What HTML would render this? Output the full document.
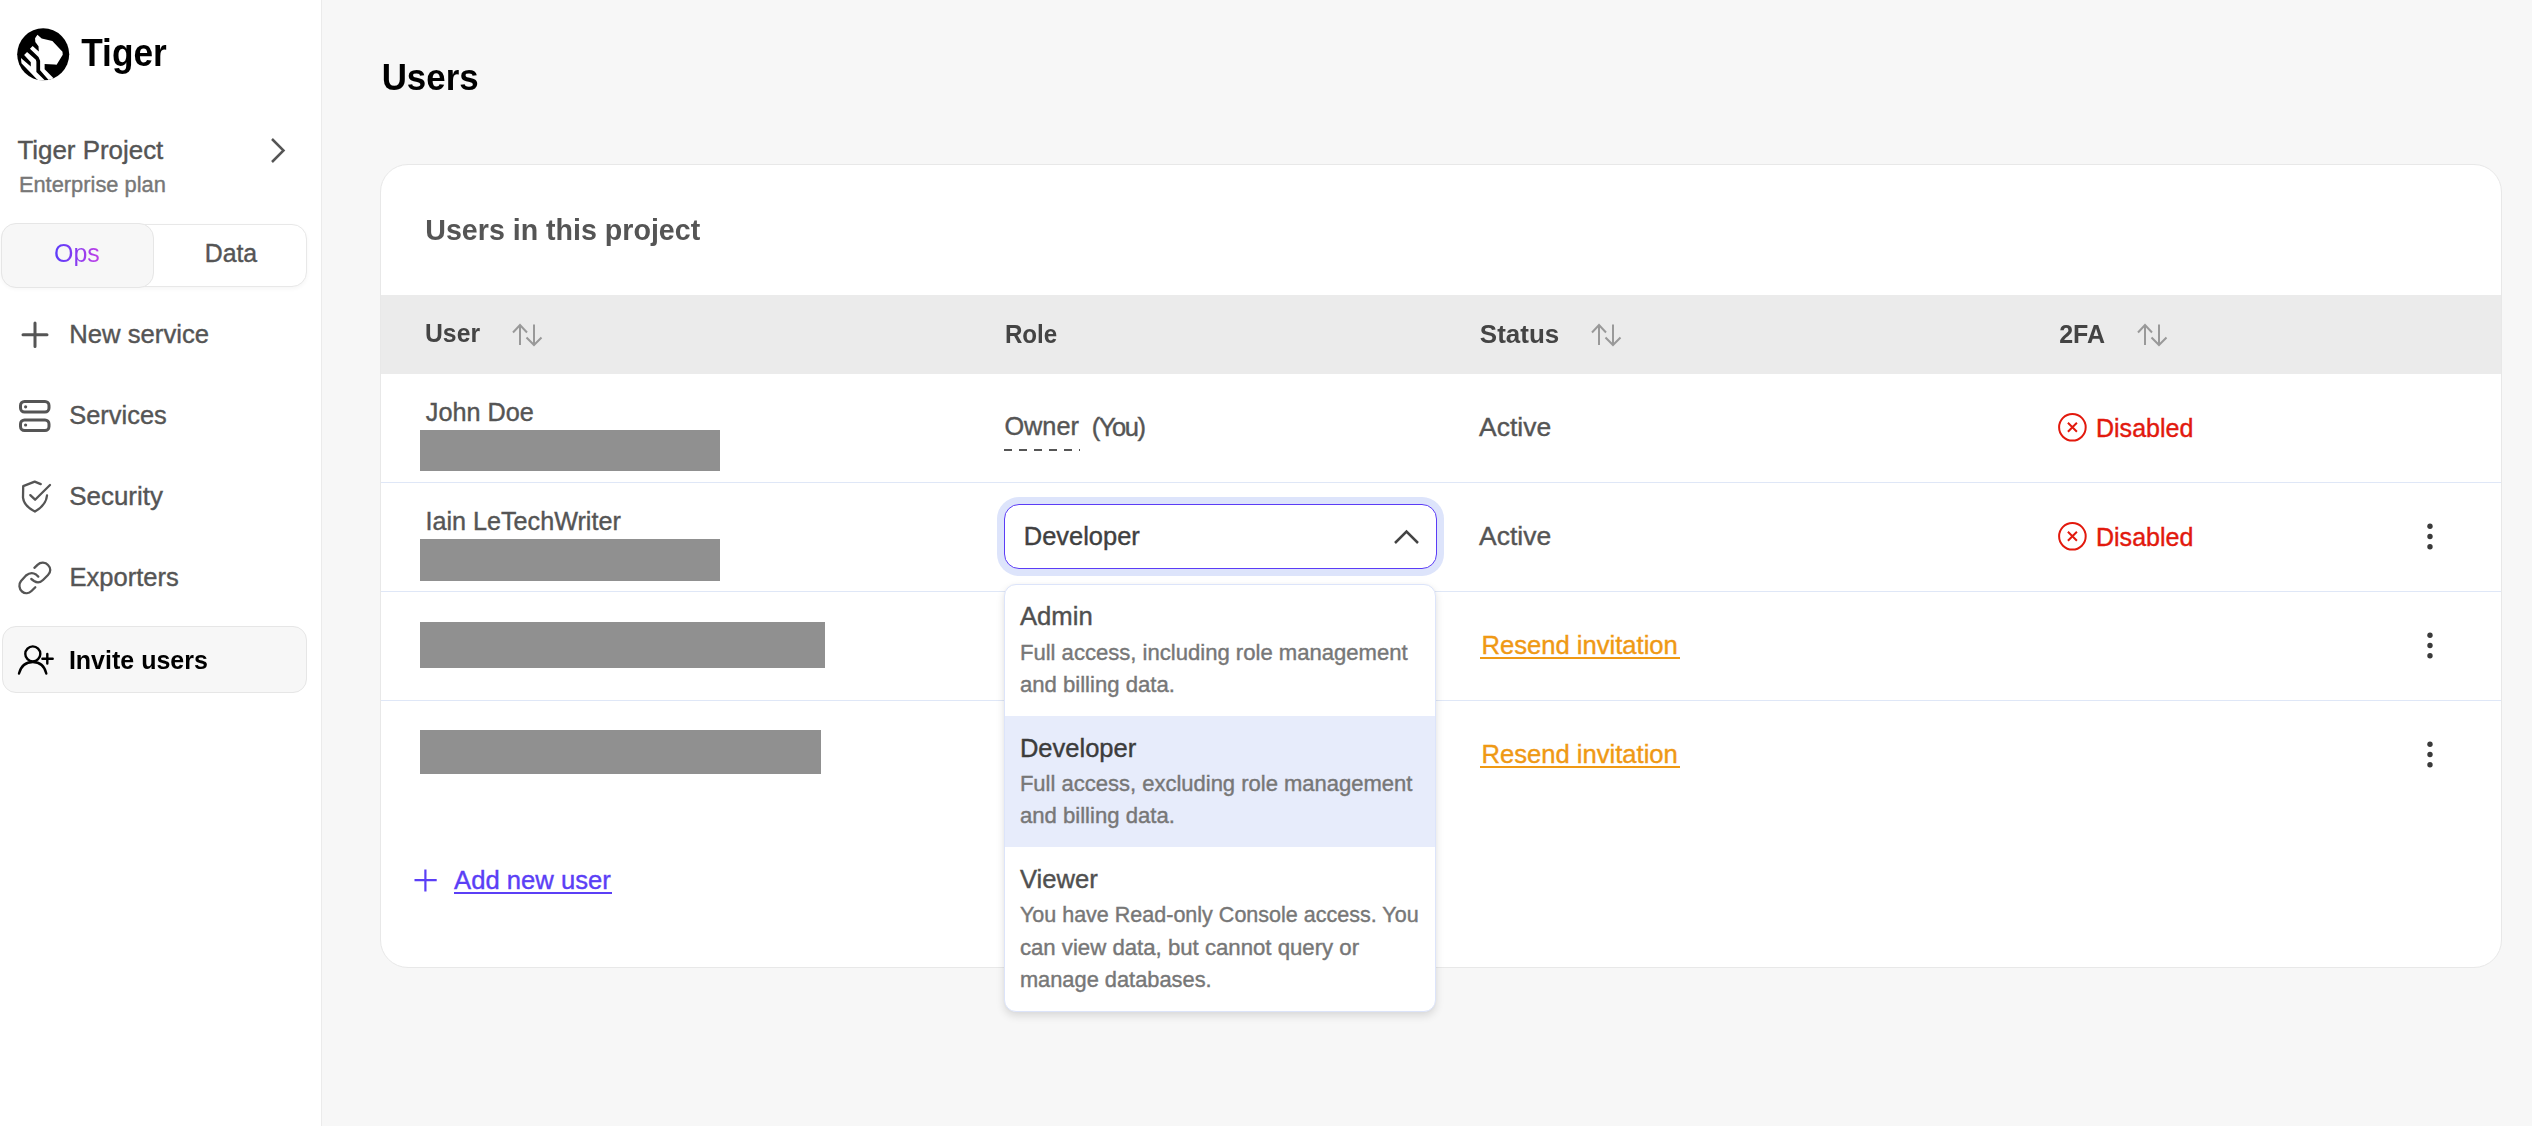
<!DOCTYPE html>
<html><head><meta charset="utf-8">
<style>
*{margin:0;padding:0;box-sizing:border-box}
html,body{width:2532px;height:1126px;overflow:hidden;background:#f7f7f7;font-family:"Liberation Sans",sans-serif}
.a{position:absolute}
.t{position:absolute;line-height:1;white-space:nowrap}
#side{position:absolute;left:0;top:0;width:321px;height:1126px;background:#fff;border-right:1px solid #ebebeb;width:322px}
svg{position:absolute;overflow:visible}
</style></head><body>
<div id="side"></div>

<!-- logo -->
<svg style="left:14px;top:25px" width="60" height="60" viewBox="0 0 1126 1126">
  <defs><clipPath id="cc"><circle cx="548" cy="551" r="488"/></clipPath></defs>
  <circle cx="548" cy="551" r="488" fill="#000"/>
  <g clip-path="url(#cc)" fill="#fff">
    <polygon points="440,185 520,255 720,300 910,500 915,560 800,745 760,740 575,730 575,830 790,1045 700,1090 490,850 490,670 460,600 300,445 350,395 465,495 460,400 400,320 395,250"/>
    <polygon points="245,505 410,650 420,690 420,880 610,1070 470,1060 140,720 130,620 315,780 315,700 190,565"/>
  </g>
</svg>

<!-- segmented control -->
<div class="a" style="left:1px;top:224px;width:306px;height:63px;background:#fff;border:1.5px solid #e8e8e8;border-radius:15px;box-shadow:0 2px 4px rgba(0,0,0,0.04)"></div>
<div class="a" style="left:1px;top:223px;width:153px;height:65px;background:#f7f7f7;border:1.5px solid #e6e6e6;border-radius:15px"></div>

<!-- chevron project -->
<svg style="left:0;top:0" width="2532" height="1126">
  <path d="M272 139 L283.5 150.5 L272 162" fill="none" stroke="#555" stroke-width="2.5"/>
</svg>

<!-- invite highlight -->
<div class="a" style="left:2px;top:626px;width:305px;height:67px;background:#f7f7f7;border:1.5px solid #e6e6e6;border-radius:14px"></div>

<!-- sidebar icons -->
<svg style="left:0;top:0" width="400" height="720">
  <g fill="none" stroke="#555" stroke-linecap="round" stroke-linejoin="round">
    <path d="M35 323 V346.6 M23 334.8 H47" stroke-width="3"/>
    <rect x="20.5" y="401.5" width="28.5" height="10.5" rx="4" stroke-width="3"/>
    <rect x="20.5" y="420" width="28.5" height="10.5" rx="4" stroke-width="3"/>
  </g>
  <g fill="#555"><circle cx="25.6" cy="406.8" r="1.6"/><circle cx="25.6" cy="425" r="1.6"/></g>
  <g transform="translate(15,477)" fill="none" stroke="#555" stroke-width="2.3" stroke-linecap="round" stroke-linejoin="round">
    <path d="M25.75 7.1 L19.7 4.6 L8.2 9.1 L8.0 20.6 C8.5 26 13 31 19.9 34.6 C26 31 31.5 25 32 18.5"/>
    <path d="M15.3 18.1 L20.1 22.7 L35 8"/>
  </g>
  <g transform="translate(15,558)" fill="none" stroke="#555" stroke-width="2.3" stroke-linecap="round" stroke-linejoin="round">
    <path d="M19.4 9.8 L22.5 6.8 C25.5 4 30.5 4 33 7 C36 10 36 14 33 17 L28 22 C25.5 24.5 22 25 19 23 L16.3 21"/>
    <path d="M23.3 18.6 L21 16.5 C18 14.5 14 15 11 17.5 L6 23 C3.5 26 4 31 7 33.5 C10 36 14 35.5 16.5 33 L20.3 29.2"/>
  </g>
  <g transform="translate(15,640)" fill="none" stroke="#000" stroke-width="2.4" stroke-linecap="round" stroke-linejoin="round">
    <circle cx="17.8" cy="13.9" r="7.5"/>
    <path d="M4 33.5 C6 26 11 22 17.8 22 C24.5 22 29.5 26 31.3 33.5"/>
    <path d="M27.4 18.8 H37.7 M32.3 14 V23.6"/>
  </g>
</svg>

<!-- card -->
<div class="a" style="left:380px;top:164px;width:2122px;height:804px;background:#fff;border:1px solid #e8e8e8;border-radius:28px;overflow:hidden">
  <div class="a" style="left:0;top:130px;width:2120px;height:79px;background:#ebebeb"></div>
  <div class="a" style="left:0;top:317px;width:2120px;height:1px;background:#dfe7f7"></div>
  <div class="a" style="left:0;top:426px;width:2120px;height:1px;background:#dfe7f7"></div>
  <div class="a" style="left:0;top:535px;width:2120px;height:1px;background:#dfe7f7"></div>
</div>

<!-- redaction bars -->
<div class="a" style="left:420px;top:430px;width:300px;height:41px;background:#909090"></div>
<div class="a" style="left:420px;top:539px;width:300px;height:42px;background:#909090"></div>
<div class="a" style="left:420px;top:622px;width:405px;height:46px;background:#909090"></div>
<div class="a" style="left:420px;top:730px;width:401px;height:44px;background:#909090"></div>

<!-- sort icons -->
<svg style="left:0;top:0" width="2532" height="1126">
  <g fill="none" stroke="#999" stroke-width="2">
    <g transform="translate(512,324)"><path d="M8 21V1M1 8.5L8 1L15 8.5M22 0.5V21M14.5 13.5L22 21L29.5 13.5"/></g>
    <g transform="translate(1591,324)"><path d="M8 21V1M1 8.5L8 1L15 8.5M22 0.5V21M14.5 13.5L22 21L29.5 13.5"/></g>
    <g transform="translate(2137,324)"><path d="M8 21V1M1 8.5L8 1L15 8.5M22 0.5V21M14.5 13.5L22 21L29.5 13.5"/></g>
  </g>
  <!-- disabled icons -->
  <g fill="none" stroke="#e2190d" stroke-width="2">
    <circle cx="2072.4" cy="427.3" r="13.3"/><path d="M2067.9 422.8 L2076.9 431.8 M2076.9 422.8 L2067.9 431.8"/>
    <circle cx="2072.4" cy="536.3" r="13.3"/><path d="M2067.9 531.8 L2076.9 540.8 M2076.9 531.8 L2067.9 540.8"/>
  </g>
  <!-- kebabs -->
  <g fill="#3a3a3a">
    <circle cx="2430" cy="526.2" r="2.7"/><circle cx="2430" cy="536.5" r="2.7"/><circle cx="2430" cy="546.7" r="2.7"/>
    <circle cx="2430" cy="635.2" r="2.7"/><circle cx="2430" cy="645.5" r="2.7"/><circle cx="2430" cy="655.7" r="2.7"/>
    <circle cx="2430" cy="744.2" r="2.7"/><circle cx="2430" cy="754.5" r="2.7"/><circle cx="2430" cy="764.7" r="2.7"/>
  </g>
  <!-- add plus -->
  <path d="M414.5 880.2 H436.7 M425.4 869.5 V891.5" stroke="#5b3ff6" stroke-width="2.2" fill="none"/>
</svg>

<!-- underlines -->
<div class="a" style="left:1004px;top:449px;width:76px;height:1.5px;background:repeating-linear-gradient(90deg,#555 0,#555 7.5px,transparent 7.5px,transparent 15px)"></div>
<div class="a" style="left:1479.5px;top:657px;width:200px;height:2px;background:#ef9914"></div>
<div class="a" style="left:1479.5px;top:766px;width:200px;height:2px;background:#ef9914"></div>
<div class="a" style="left:454px;top:892px;width:158px;height:2px;background:#5b3ff6"></div>

<!-- select -->
<div class="a" style="left:1004px;top:504px;width:432.5px;height:65px;border:1.5px solid #5b3cf6;border-radius:15px;box-shadow:0 0 0 7px #dde4fb;background:#fff"></div>

<div class="t" style="left:81.20px;top:36.44px;font-size:35.26px;font-weight:700;color:#000;transform:scaleY(1.080);transform-origin:0 29.86px;">Tiger</div>
<div class="t" style="left:17.40px;top:138.05px;font-size:25.92px;font-weight:400;color:#555;-webkit-text-stroke:0.4px currentColor;">Tiger Project</div>
<div class="t" style="left:18.90px;top:174.30px;font-size:21.85px;font-weight:400;color:#777;-webkit-text-stroke:0.4px currentColor;">Enterprise plan</div>
<div class="t" style="left:54.00px;top:240.87px;font-size:24.96px;font-weight:400;color:#6a3cf6;background:linear-gradient(90deg,#5a3cfa 0%,#8a3cf0 50%,#c03ee6 100%);-webkit-background-clip:text;background-clip:text;-webkit-text-fill-color:transparent;">Ops</div>
<div class="t" style="left:204.70px;top:241.96px;font-size:24.85px;font-weight:400;color:#555;-webkit-text-stroke:0.4px currentColor;">Data</div>
<div class="t" style="left:69.30px;top:322.28px;font-size:25.66px;font-weight:400;color:#555;-webkit-text-stroke:0.4px currentColor;">New service</div>
<div class="t" style="left:69.30px;top:403.37px;font-size:25.42px;font-weight:400;color:#555;-webkit-text-stroke:0.4px currentColor;">Services</div>
<div class="t" style="left:69.30px;top:484.26px;font-size:25.91px;font-weight:400;color:#555;-webkit-text-stroke:0.4px currentColor;">Security</div>
<div class="t" style="left:69.50px;top:565.08px;font-size:25.54px;font-weight:400;color:#555;-webkit-text-stroke:0.4px currentColor;">Exporters</div>
<div class="t" style="left:68.90px;top:647.92px;font-size:25.01px;font-weight:700;color:#000;transform:scaleY(1.052);transform-origin:0 21.18px;">Invite users</div>
<div class="t" style="left:381.70px;top:60.96px;font-size:34.89px;font-weight:700;color:#000;transform:scaleY(1.083);transform-origin:0 29.54px;">Users</div>
<div class="t" style="left:425.30px;top:215.78px;font-size:28.60px;font-weight:700;color:#555;transform:scaleY(1.052);transform-origin:0 24.22px;">Users in this project</div>
<div class="t" style="left:425.00px;top:322.35px;font-size:24.75px;font-weight:700;color:#444;transform:scaleY(1.069);transform-origin:0 20.95px;">User</div>
<div class="t" style="left:1004.90px;top:322.53px;font-size:24.18px;font-weight:700;color:#444;transform:scaleY(1.088);transform-origin:0 20.47px;">Role</div>
<div class="t" style="left:1479.80px;top:320.99px;font-size:25.99px;font-weight:700;color:#444;transform:scaleY(1.007);transform-origin:0 22.01px;">Status</div>
<div class="t" style="left:2059.20px;top:321.82px;font-size:25.01px;font-weight:700;color:#444;transform:scaleY(1.052);transform-origin:0 21.18px;">2FA</div>
<div class="t" style="left:425.80px;top:399.63px;font-size:25.23px;font-weight:400;color:#555;-webkit-text-stroke:0.4px currentColor;">John Doe</div>
<div class="t" style="left:425.50px;top:508.69px;font-size:25.17px;font-weight:400;color:#555;-webkit-text-stroke:0.4px currentColor;">Iain LeTechWriter</div>
<div class="t" style="left:1004.40px;top:414.48px;font-size:25.30px;font-weight:400;color:#555;-webkit-text-stroke:0.4px currentColor;">Owner</div>
<div class="t" style="left:1091.70px;top:414.91px;font-size:25.50px;font-weight:400;color:#555;-webkit-text-stroke:0.4px currentColor;letter-spacing:-1.4px;">(You)</div>
<div class="t" style="left:1479.10px;top:414.41px;font-size:26.45px;font-weight:400;color:#555;-webkit-text-stroke:0.4px currentColor;">Active</div>
<div class="t" style="left:2096.00px;top:415.61px;font-size:25.02px;font-weight:400;color:#e2190d;-webkit-text-stroke:0.4px currentColor;">Disabled</div>
<div class="t" style="left:1479.10px;top:523.41px;font-size:26.45px;font-weight:400;color:#555;-webkit-text-stroke:0.4px currentColor;">Active</div>
<div class="t" style="left:2096.00px;top:524.61px;font-size:25.02px;font-weight:400;color:#e2190d;-webkit-text-stroke:0.4px currentColor;">Disabled</div>
<div class="t" style="left:1481.40px;top:633.30px;font-size:25.62px;font-weight:400;color:#ef9914;-webkit-text-stroke:0.4px currentColor;">Resend invitation</div>
<div class="t" style="left:1481.40px;top:742.30px;font-size:25.62px;font-weight:400;color:#ef9914;-webkit-text-stroke:0.4px currentColor;">Resend invitation</div>
<div class="t" style="left:1023.80px;top:524.45px;font-size:25.45px;font-weight:400;color:#404040;-webkit-text-stroke:0.4px currentColor;">Developer</div>
<div class="t" style="left:454.10px;top:868.09px;font-size:25.64px;font-weight:400;color:#5b3ff6;-webkit-text-stroke:0.4px currentColor;">Add new user</div>


<!-- dropdown -->
<div class="a" style="left:1004px;top:584px;width:432px;height:428px;background:#fff;border:1.2px solid #dce4fa;border-radius:12px;box-shadow:0 4px 8px rgba(0,0,0,0.12),0 0 3px rgba(0,0,0,0.03);overflow:hidden">
  <div class="a" style="left:0;top:131px;width:100%;height:131px;background:#e7ecfb"></div>
</div>
<svg style="left:0;top:0" width="2532" height="1126">
  <path d="M1395 543 L1406.5 531.5 L1418 543" fill="none" stroke="#444" stroke-width="2.5"/>
</svg>
<div class="t" style="left:1019.90px;top:604.46px;font-size:25.68px;font-weight:400;color:#505050;-webkit-text-stroke:0.4px currentColor;">Admin</div>
<div class="t" style="left:1019.90px;top:642.21px;font-size:22.08px;font-weight:400;color:#777;-webkit-text-stroke:0.4px currentColor;">Full access, including role management</div>
<div class="t" style="left:1019.90px;top:674.17px;font-size:22.13px;font-weight:400;color:#777;-webkit-text-stroke:0.4px currentColor;">and billing data.</div>
<div class="t" style="left:1019.90px;top:735.58px;font-size:25.54px;font-weight:400;color:#3c3c3c;-webkit-text-stroke:0.4px currentColor;">Developer</div>
<div class="t" style="left:1019.90px;top:773.46px;font-size:22.01px;font-weight:400;color:#777;-webkit-text-stroke:0.4px currentColor;">Full access, excluding role management</div>
<div class="t" style="left:1019.90px;top:804.77px;font-size:22.13px;font-weight:400;color:#777;-webkit-text-stroke:0.4px currentColor;">and billing data.</div>
<div class="t" style="left:1019.90px;top:866.81px;font-size:25.61px;font-weight:400;color:#505050;-webkit-text-stroke:0.4px currentColor;">Viewer</div>
<div class="t" style="left:1019.90px;top:904.57px;font-size:21.53px;font-weight:400;color:#777;-webkit-text-stroke:0.4px currentColor;">You have Read-only Console access. You</div>
<div class="t" style="left:1019.90px;top:937.30px;font-size:22.20px;font-weight:400;color:#777;-webkit-text-stroke:0.4px currentColor;">can view data, but cannot query or</div>
<div class="t" style="left:1019.90px;top:969.00px;font-size:21.84px;font-weight:400;color:#777;-webkit-text-stroke:0.4px currentColor;">manage databases.</div>
</body></html>
